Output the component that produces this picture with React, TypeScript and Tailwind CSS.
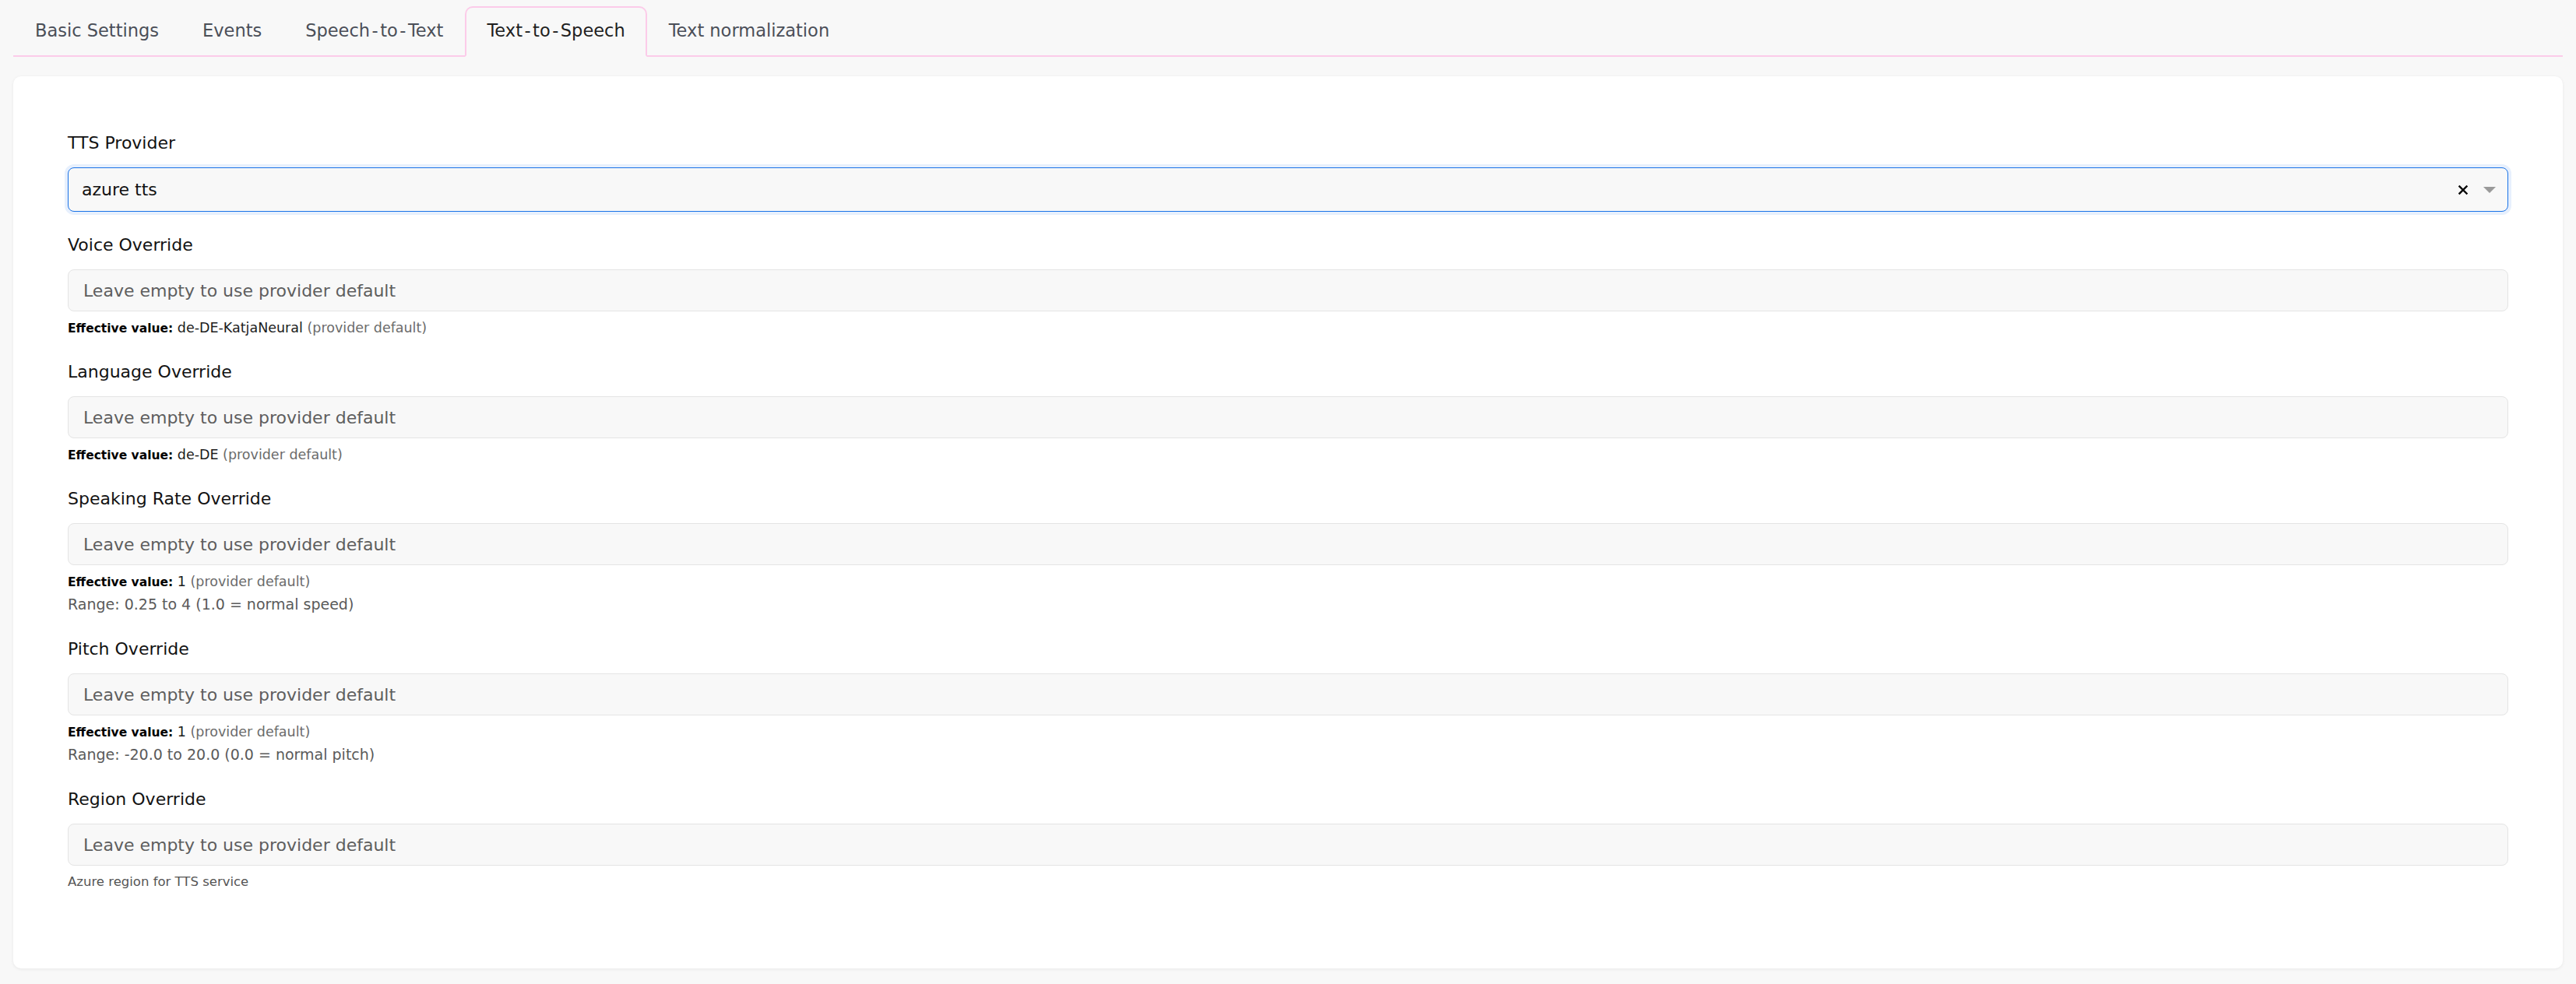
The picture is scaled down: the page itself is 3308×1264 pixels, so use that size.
import clsx from "clsx"

const font = "font-['DejaVu_Sans',sans-serif]"

const tabs = ["Basic Settings", "Events", "Speech-to-Text", "Text-to-Speech", "Text normalization"]

type Field = {
  label: string
  value?: string
  range?: string
  note?: string
}

const fields: Field[] = [
  { label: "Voice Override", value: "de-DE-KatjaNeural" },
  { label: "Language Override", value: "de-DE" },
  { label: "Speaking Rate Override", value: "1", range: "Range: 0.25 to 4 (1.0 = normal speed)" },
  { label: "Pitch Override", value: "1", range: "Range: -20.0 to 20.0 (0.0 = normal pitch)" },
  { label: "Region Override", note: "Azure region for TTS service" },
]

// the reference font has wider hyphens than DejaVu
function TabLabel({ text }: { text: string }) {
  const parts = text.split("-")
  return (
    <>
      {parts.map((p, i) => (
        <span key={i}>
          {i > 0 && <span className="mx-[2.5px]">-</span>}
          {p}
        </span>
      ))}
    </>
  )
}

function TextField({ field }: { field: Field }) {
  return (
    <div className="flex flex-col">
      <label className="text-[22px] leading-[32px] text-[#121212]">{field.label}</label>
      <input
        type="text"
        placeholder="Leave empty to use provider default"
        className={`${font} mt-[15px] h-[54px] w-full rounded-[8px] border border-[#e4e4e4] bg-[#f8f8f8] px-[19px] text-[22px] text-[#121212] outline-none placeholder:font-['DejaVu_Sans',sans-serif] placeholder:text-[22px] placeholder:text-[#5e5e5e]`}
      />
      <div className="mt-[7px]">
        {field.value && (
          <p className="text-[17.5px] leading-[28px] text-[#1c1c1c]">
            <span className="text-[15.5px] leading-none font-bold text-black">Effective value:</span> {field.value}{" "}
            <span className="text-[#6b6b6b]">(provider default)</span>
          </p>
        )}
        {field.range && <p className="text-[19px] leading-[30px] text-[#5a5a5a]">{field.range}</p>}
        {field.note && <p className="text-[16.5px] leading-[28px] text-[#555555]">{field.note}</p>}
      </div>
    </div>
  )
}

export default function App() {
  return (
    <div className={`${font} min-h-screen bg-[#f8f8f8] px-[17px] pt-[8px]`}>
      <nav className="flex border-b-2 border-[#fccbe9]">
        {tabs.map((t, i) => {
          const active = i === 3
          return (
            <button
              key={t}
              className={clsx(
                font,
                "-mb-[2px] flex h-[65px] items-center rounded-t-[10px] border-2 px-[26px] pb-[1px] text-[22.5px]",
                active
                  ? "border-[#fccbe9] border-b-[#f8f8f8] bg-[#f8f8f8] text-[#1f1f1f]"
                  : "border-transparent text-[#4b4f58]"
              )}
            >
              <TabLabel text={t} />
            </button>
          )
        })}
      </nav>

      <div className="mt-[25px] rounded-[10px] bg-white px-[70px] pt-[70px] pb-[97px] shadow-[0_1px_4px_rgba(0,0,0,0.07)]">
        <div className="flex flex-col gap-[27px]">
          <div className="flex flex-col">
            <label className="text-[22px] leading-[32px] text-[#121212]">TTS Provider</label>
            <div className="mt-[15px] flex h-[57px] items-center rounded-[8px] border border-[#1a73e8] bg-[#f8f8f8] pl-[17px] pr-[15px] ring-4 ring-[#e7f0fd]">
              <span className="flex-1 text-[22px] text-[#111111]">azure tts</span>
              <svg width="12" height="12" viewBox="0 0 12 12" className="mr-[20px]">
                <path d="M1.5 1.5L10.5 10.5M10.5 1.5L1.5 10.5" stroke="#000" strokeWidth="2.4" strokeLinecap="square" />
              </svg>
              <svg width="16" height="8" viewBox="0 0 16 8">
                <path d="M0 0H16L8 8Z" fill="#9a9a9a" />
              </svg>
            </div>
          </div>
          {fields.map((f) => (
            <TextField key={f.label} field={f} />
          ))}
        </div>
      </div>
    </div>
  )
}
